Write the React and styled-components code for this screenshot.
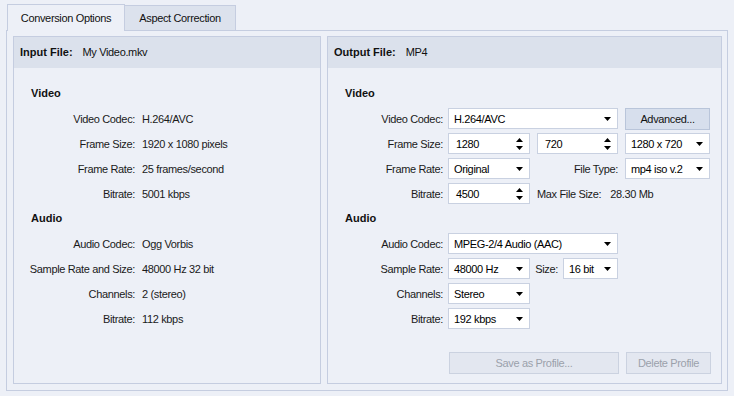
import React from 'react';
import styled, { createGlobalStyle } from 'styled-components';

const Global = createGlobalStyle`
  html, body { margin: 0; padding: 0; background: #edf0f7; }
  body {
    font-family: "Liberation Sans", Arial, sans-serif;
    font-size: 11px;
    letter-spacing: -0.35px;
    color: #111;
  }
  * { box-sizing: border-box; }
`;

const Page = styled.div`
  width: 734px;
  height: 396px;
  padding: 4px 6px 0 6px;
  display: flex;
  flex-direction: column;
  white-space: nowrap;
`;

const TabRow = styled.div`
  display: flex;
  align-items: flex-end;
  padding-left: 1px;
  height: 26px;
`;

const Tab = styled.div`
  width: ${p => p.$w}px;
  height: ${p => (p.$active ? 27 : 25)}px;
  margin-bottom: ${p => (p.$active ? -1 : 0)}px;
  background: ${p => (p.$active ? '#edf0f7' : '#dce2ed')};
  border: 1px solid #c5cde0;
  border-bottom: none;
  ${p => (p.$active ? '' : 'border-left: none;')}
  position: relative;
  z-index: ${p => (p.$active ? 1 : 0)};
  display: flex;
  align-items: center;
  justify-content: center;
  padding-bottom: ${p => (p.$active ? 1 : 0)}px;
  color: #111;
`;

const Frame = styled.div`
  height: 361px;
  border: 1px solid #c5cde0;
  padding: 5px 5px 6px 6px;
  display: flex;
  gap: 6px;
`;

const Panel = styled.div`
  width: ${p => (p.$w ? `${p.$w}px` : 'auto')};
  flex: ${p => (p.$w ? 'none' : '1')};
  border: 1px solid #c5cde0;
  display: flex;
  flex-direction: column;
`;

const Header = styled.div`
  height: 31px;
  background: #dbe1ec;
  display: flex;
  align-items: center;
  padding-left: 6px;
  padding-bottom: 1px;
`;

const HeaderLabel = styled.span`
  font-weight: bold;
  letter-spacing: 0;
  margin-right: 10px;
`;

const Body = styled.div`
  flex: 1;
  display: flex;
  flex-direction: column;
  padding: 13px 10px 9px 17px;
`;

const SectionTitle = styled.div`
  height: 25px;
  line-height: 25px;
  font-weight: bold;
  letter-spacing: 0;
`;

const Row = styled.div`
  height: 25px;
  display: flex;
  align-items: center;
`;

const Label = styled.div`
  width: ${p => p.$w}px;
  flex: none;
  display: flex;
  justify-content: flex-end;
  margin-right: ${p => p.$gap}px;
  color: #1a1a1a;
`;

const Value = styled.div`
  color: #1a1a1a;
`;

const Field = styled.div`
  width: ${p => p.$w}px;
  height: 21px;
  flex: none;
  background: #fff;
  border: 1px solid #c9d1e1;
  display: flex;
  align-items: center;
  justify-content: space-between;
  padding: 0 ${p => p.$pr || 6}px 0 ${p => p.$pl || 5}px;
  margin-right: ${p => p.$mr || 0}px;
  color: #000;
`;

const Btn = styled.div`
  width: ${p => p.$w}px;
  height: ${p => p.$h || 22}px;
  flex: none;
  display: flex;
  align-items: center;
  justify-content: center;
  background: ${p => (p.$disabled ? '#e3e7f0' : '#d7dfed')};
  border: 1px solid ${p => (p.$disabled ? '#cbd2e0' : '#b9c5da')};
  color: ${p => (p.$disabled ? '#9ba1ab' : '#111')};
  margin-right: ${p => p.$mr || 0}px;
`;

const Inline = styled.span`
  margin-right: ${p => p.$mr || 0}px;
  flex: none;
  color: #1a1a1a;
`;

const InlineLabel = styled.div`
  width: ${p => p.$w}px;
  flex: none;
  display: flex;
  justify-content: flex-end;
  margin-right: ${p => p.$gap}px;
  color: #1a1a1a;
`;

const ButtonRow = styled.div`
  margin-top: auto;
  display: flex;
  padding-left: 104px;
`;

const Down = () => (
  <svg width="7" height="4" viewBox="0 0 7 4">
    <polygon points="0,0 7,0 3.5,4" fill="#000" />
  </svg>
);

const Spin = () => (
  <svg width="7" height="14" viewBox="0 0 7 14">
    <polygon points="3.5,1 7,5 0,5" fill="#000" />
    <polygon points="0,9 7,9 3.5,13" fill="#000" />
  </svg>
);

const Select = ({ w, children, mr }) => (
  <Field $w={w} $mr={mr}>
    <span>{children}</span>
    <Down />
  </Field>
);

const SpinBox = ({ w, children, mr }) => (
  <Field $w={w} $mr={mr} $pl={7} $pr={6}>
    <span>{children}</span>
    <Spin />
  </Field>
);

const InfoRow = ({ label, value }) => (
  <Row>
    <Label $w={104} $gap={7}>{label}</Label>
    <Value>{value}</Value>
  </Row>
);

const Lbl = ({ children }) => (
  <Label $w={98} $gap={5}>{children}</Label>
);

export default function App() {
  return (
    <>
      <Global />
      <Page>
        <TabRow>
          <Tab $active $w={118}>Conversion Options</Tab>
          <Tab $w={111}>Aspect Correction</Tab>
        </TabRow>
        <Frame>
          <Panel $w={308}>
            <Header>
              <HeaderLabel>Input File:</HeaderLabel>
              <span>My Video.mkv</span>
            </Header>
            <Body>
              <SectionTitle>Video</SectionTitle>
              <InfoRow label="Video Codec:" value="H.264/AVC" />
              <InfoRow label="Frame Size:" value="1920 x 1080 pixels" />
              <InfoRow label="Frame Rate:" value="25 frames/second" />
              <InfoRow label="Bitrate:" value="5001 kbps" />
              <SectionTitle>Audio</SectionTitle>
              <InfoRow label="Audio Codec:" value="Ogg Vorbis" />
              <InfoRow label="Sample Rate and Size:" value="48000 Hz 32 bit" />
              <InfoRow label="Channels:" value="2 (stereo)" />
              <InfoRow label="Bitrate:" value="112 kbps" />
            </Body>
          </Panel>
          <Panel>
            <Header>
              <HeaderLabel>Output File:</HeaderLabel>
              <span>MP4</span>
            </Header>
            <Body>
              <SectionTitle>Video</SectionTitle>
              <Row>
                <Lbl>Video Codec:</Lbl>
                <Select w={170} mr={7}>H.264/AVC</Select>
                <Btn $w={85}>Advanced...</Btn>
              </Row>
              <Row>
                <Lbl>Frame Size:</Lbl>
                <SpinBox w={82} mr={7}>1280</SpinBox>
                <SpinBox w={81} mr={7}>720</SpinBox>
                <Select w={85}>1280 x 720</Select>
              </Row>
              <Row>
                <Lbl>Frame Rate:</Lbl>
                <Select w={82}>Original</Select>
                <InlineLabel $w={88} $gap={7}>File Type:</InlineLabel>
                <Select w={85}>mp4 iso v.2</Select>
              </Row>
              <Row>
                <Lbl>Bitrate:</Lbl>
                <SpinBox w={82} mr={7}>4500</SpinBox>
                <Inline $mr={9}>Max File Size:</Inline>
                <Inline>28.30 Mb</Inline>
              </Row>
              <SectionTitle>Audio</SectionTitle>
              <Row>
                <Lbl>Audio Codec:</Lbl>
                <Select w={170}>MPEG-2/4 Audio (AAC)</Select>
              </Row>
              <Row>
                <Lbl>Sample Rate:</Lbl>
                <Select w={82}>48000 Hz</Select>
                <InlineLabel $w={28} $gap={5}>Size:</InlineLabel>
                <Select w={55}>16 bit</Select>
              </Row>
              <Row>
                <Lbl>Channels:</Lbl>
                <Select w={82}>Stereo</Select>
              </Row>
              <Row>
                <Lbl>Bitrate:</Lbl>
                <Select w={82}>192 kbps</Select>
              </Row>
              <ButtonRow>
                <Btn $w={170} $mr={7} $disabled>Save as Profile...</Btn>
                <Btn $w={85} $disabled>Delete Profile</Btn>
              </ButtonRow>
            </Body>
          </Panel>
        </Frame>
      </Page>
    </>
  );
}
